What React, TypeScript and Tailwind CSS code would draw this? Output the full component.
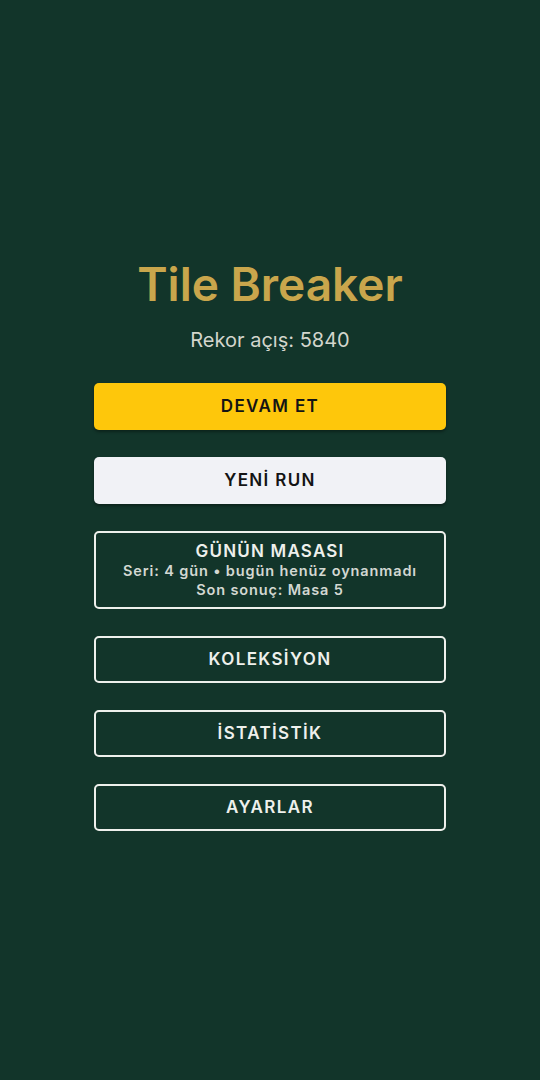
export default function App() {
  const outlined = ['KOLEKSİYON', 'İSTATİSTİK', 'AYARLAR']

  return (
    <div className="flex min-h-screen w-full flex-col items-center bg-[#12352a] pt-[257px] font-['Inter',sans-serif]">
      <div className="flex w-[352px] flex-col items-center">
        <h1 className="text-[46px] font-semibold leading-[54px] text-[#c9a64c]">Tile Breaker</h1>
        <p className="mt-[16px] text-[20px] leading-[26px] text-[#d3d6cd]">Rekor açış: 5840</p>

        <div className="mt-[30px] flex w-full flex-col gap-[27px]">
          <button className="h-[47px] w-full rounded-[5px] bg-[#fec70b] text-[17px] font-semibold tracking-[0.08em] text-[#141414] shadow-[0_2px_3px_rgba(0,0,0,0.35)]">
            DEVAM ET
          </button>
          <button className="h-[47px] w-full rounded-[5px] bg-[#f1f2f6] text-[17px] font-semibold tracking-[0.08em] text-[#141414] shadow-[0_2px_3px_rgba(0,0,0,0.35)]">
            YENİ RUN
          </button>
          <button className="flex h-[78px] w-full flex-col items-center justify-center rounded-[5px] border-2 border-[#eef0ec] text-[#eef0ec]">
            <span className="text-[17px] font-semibold leading-[20px] tracking-[0.07em]">GÜNÜN MASASI</span>
            <span className="text-[14.5px] font-semibold leading-[19px] tracking-[0.06em] text-[#d3d8d2]">
              Seri: 4 gün • bugün henüz oynanmadı
            </span>
            <span className="text-[14.5px] font-semibold leading-[19px] tracking-[0.06em] text-[#d3d8d2]">
              Son sonuç: Masa 5
            </span>
          </button>
          {outlined.map((label) => (
            <button
              key={label}
              className="h-[47px] w-full rounded-[5px] border-2 border-[#eef0ec] text-[17px] font-semibold tracking-[0.08em] text-[#eef0ec]"
            >
              {label}
            </button>
          ))}
        </div>
      </div>
    </div>
  )
}
